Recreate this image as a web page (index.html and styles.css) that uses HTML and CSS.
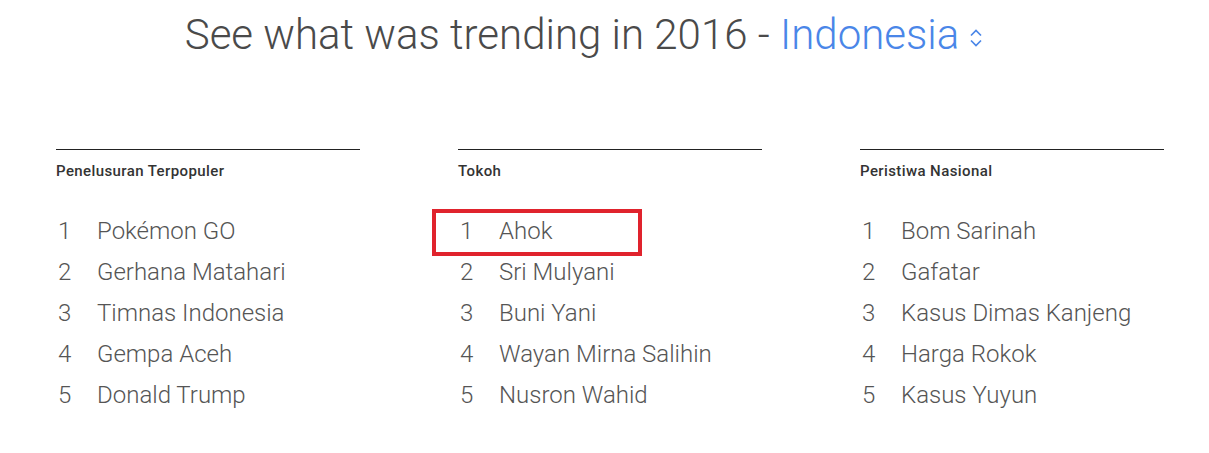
FILE: index.html
```html
<!DOCTYPE html>
<html lang="id">
<head>
<meta charset="utf-8">
<link rel="stylesheet" href="styles.css">
</head>
<body>
<h1 class="title">See what was trending in 2016 - <span class="country">Indonesia<svg class="chev" width="12" height="18" viewBox="0 0 12 18"><path d="M1 6.5 L6 1.5 L11 6.5" fill="none" stroke="#4a86e8" stroke-width="1.7"/><path d="M1 11.5 L6 16.5 L11 11.5" fill="none" stroke="#4a86e8" stroke-width="1.7"/></svg></span></h1>
<div class="columns">
  <section class="col">
    <h2 class="col-title">Penelusuran Terpopuler</h2>
    <ol class="list">
      <li><span class="num">1</span><span class="name">Pokémon GO</span></li>
      <li><span class="num">2</span><span class="name">Gerhana Matahari</span></li>
      <li><span class="num">3</span><span class="name">Timnas Indonesia</span></li>
      <li><span class="num">4</span><span class="name">Gempa Aceh</span></li>
      <li><span class="num">5</span><span class="name">Donald Trump</span></li>
    </ol>
  </section>
  <section class="col">
    <h2 class="col-title">Tokoh</h2>
    <ol class="list">
      <li class="marked"><span class="num">1</span><span class="name">Ahok</span></li>
      <li><span class="num">2</span><span class="name">Sri Mulyani</span></li>
      <li><span class="num">3</span><span class="name">Buni Yani</span></li>
      <li><span class="num">4</span><span class="name">Wayan Mirna Salihin</span></li>
      <li><span class="num">5</span><span class="name">Nusron Wahid</span></li>
    </ol>
  </section>
  <section class="col">
    <h2 class="col-title">Peristiwa Nasional</h2>
    <ol class="list">
      <li><span class="num">1</span><span class="name">Bom Sarinah</span></li>
      <li><span class="num">2</span><span class="name">Gafatar</span></li>
      <li><span class="num">3</span><span class="name">Kasus Dimas Kanjeng</span></li>
      <li><span class="num">4</span><span class="name">Harga Rokok</span></li>
      <li><span class="num">5</span><span class="name">Kasus Yuyun</span></li>
    </ol>
  </section>
</div>
</body>
</html>
```
FILE: styles.css
```css
html, body { margin: 0; padding: 0; background: #fff; }
body { font-family: Roboto, "Noto Sans", sans-serif; color: #444; width: 1209px; height: 453px; overflow: hidden; }
.title {
  margin: 0;
  padding-top: 10px;
  padding-right: 42px;
  text-align: center;
  font-weight: 300;
  font-size: 42px;
  line-height: 50px;
  color: #4a4a4a;
  letter-spacing: 0;
}
.country { color: #4a86e8; }
.chev { vertical-align: middle; margin-left: 11px; position: relative; top: 0; }
.columns {
  display: grid;
  grid-template-columns: repeat(3, 304px);
  column-gap: 98px;
  padding-left: 56px;
  margin-top: 89px;
}
.col { border-top: 1px solid #222; }
.col-title {
  margin: 0;
  padding-top: 12px;
  font-size: 15px;
  font-weight: 500;
  line-height: 18px;
  letter-spacing: 0.4px;
  color: #333;
}
.list { list-style: none; margin: 0; padding: 0; padding-top: 31px; }
.list li {
  display: flex;
  height: 41px;
  line-height: 41px;
  font-size: 24px;
  font-weight: 300;
  color: #555;
  position: relative;
}
.num { width: 41px; padding-left: 2px; box-sizing: border-box; }
.marked::before {
  content: "";
  position: absolute;
  left: -26px;
  top: -2px;
  width: 210px;
  height: 47px;
  box-sizing: border-box;
  border: 4px solid #e0232d;
}
```
